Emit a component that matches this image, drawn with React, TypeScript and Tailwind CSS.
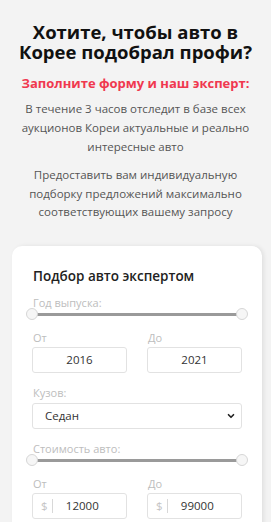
import { ChevronDown } from 'lucide-react';

function RangeSlider() {
    return (
        <div className="relative h-[12px] mt-[-2px] mx-[-6px]">
            <div className="absolute left-[6px] right-[6px] top-[5px] h-[3px] bg-[#9a9a9a] rounded" />
            <div className="absolute left-0 top-0 w-[12px] h-[12px] rounded-full bg-[#f6f6f6] border border-[#d6d6d6]" />
            <div className="absolute right-0 top-0 w-[12px] h-[12px] rounded-full bg-[#f6f6f6] border border-[#d6d6d6]" />
        </div>
    );
}

function Field({ value, prefix }: { value: string; prefix?: boolean }) {
    return (
        <div className="h-[26px] border border-[#e2e2e2] rounded-[3px] bg-white flex items-center text-[11.5px] text-[#333]">
            {prefix ? (
                <>
                    <span className="pl-[8px] pr-[4px] text-[#c4c4c4]">$</span>
                    <span className="w-px h-[14px] bg-[#d8d8d8]" />
                    <span className="flex-1 text-center pr-[14px]">{value}</span>
                </>
            ) : (
                <span className="flex-1 text-center">{value}</span>
            )}
        </div>
    );
}

export default function App() {
    return (
        <div className="bg-[#f3f3f3] w-[271px] h-[522px] overflow-hidden font-['Open_Sans',sans-serif]">
            {/* Header */}
            <div className="pt-[22px] text-center">
                <h1 className="text-[18.5px] leading-[20px] font-bold text-[#111] whitespace-nowrap">
                    Хотите, чтобы авто в<br />Корее подобрал профи?
                </h1>
                <p className="mt-[13px] text-[13px] leading-[16px] font-bold text-[#f0384f] whitespace-nowrap">
                    Заполните форму и наш эксперт:
                </p>
                <p className="mt-[8px] text-[11.5px] leading-[19px] text-[#555] whitespace-nowrap">
                    В течение 3 часов отследит в базе всех<br />аукционов Кореи актуальные и реально<br />интересные авто
                </p>
                <p className="mt-[10px] text-[11.5px] leading-[18.5px] text-[#555] whitespace-nowrap">
                    Предоставить вам индивидуальную<br />подборку предложений максимально<br />соответствующих вашему запросу
                </p>
            </div>

            {/* Form card */}
            <div className="mt-[24px] mx-[12px] w-[250px] bg-white rounded-t-[10px] shadow-[2px_0_4px_rgba(0,0,0,0.08)] px-[20px] pt-[20px] pb-6">
                <h2 className="text-[13.5px] font-semibold text-[#222] leading-[20px] pl-px">Подбор авто экспертом</h2>

                <div className="mt-[10px] text-[11px] leading-[14px] text-[#bdbdbd] pl-px">Год выпуска:</div>
                <RangeSlider />

                <div className="mt-[11px] grid grid-cols-2 gap-[20px]">
                    <div>
                        <div className="text-[11px] leading-[14px] text-[#bdbdbd] mb-[2px] pl-px">От</div>
                        <Field value="2016" />
                    </div>
                    <div>
                        <div className="text-[11px] leading-[14px] text-[#bdbdbd] mb-[2px] pl-px">До</div>
                        <Field value="2021" />
                    </div>
                </div>

                <div className="mt-[13px] text-[11px] leading-[14px] text-[#bdbdbd] pl-px">Кузов:</div>
                <div className="mt-[3px] h-[26px] border border-[#e2e2e2] rounded-[3px] flex items-center justify-between pl-[12px] pr-[5px] text-[11.5px] text-[#333]">
                    <span>Седан</span>
                    <ChevronDown size={10} strokeWidth={4} className="text-[#222]" />
                </div>

                <div className="mt-[13px] text-[11px] leading-[14px] text-[#bdbdbd] pl-px">Стоимость авто:</div>
                <RangeSlider />

                <div className="mt-[11px] grid grid-cols-2 gap-[20px]">
                    <div>
                        <div className="text-[11px] leading-[14px] text-[#bdbdbd] mb-[2px] pl-px">От</div>
                        <Field value="12000" prefix />
                    </div>
                    <div>
                        <div className="text-[11px] leading-[14px] text-[#bdbdbd] mb-[2px] pl-px">До</div>
                        <Field value="99000" prefix />
                    </div>
                </div>
            </div>
        </div>
    );
}
